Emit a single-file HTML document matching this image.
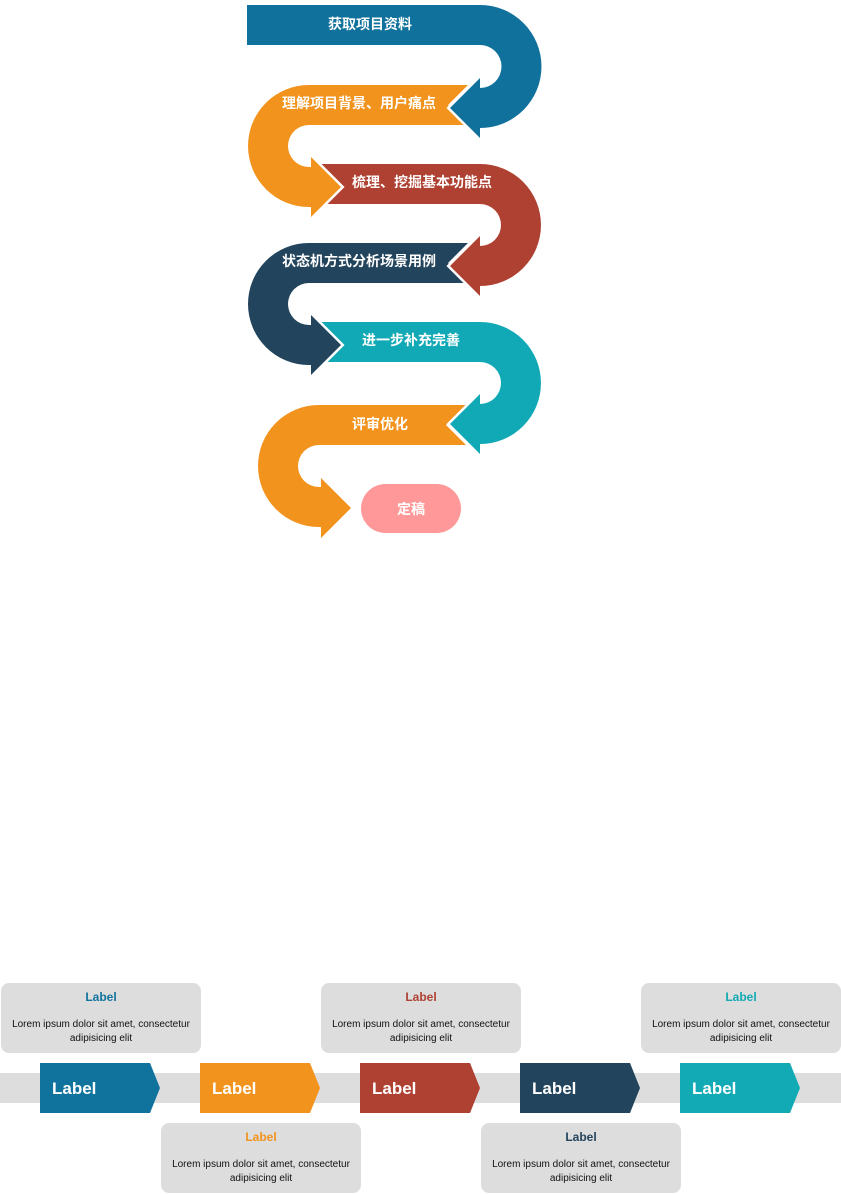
<!DOCTYPE html>
<html><head><meta charset="utf-8"><style>
body{margin:0;width:841px;height:1194px;background:#fff;overflow:hidden;position:relative;font-family:"Liberation Sans","Noto Sans CJK SC",sans-serif}
svg{position:absolute;left:0;top:0}
.card{position:absolute;width:200px;height:70px;background:#dddddd;border-radius:8px;text-align:center}
.card b{display:block;font-size:12px;margin-top:7px;line-height:14px}
.card p{margin:14px 0 0;font-size:10px;line-height:14px;color:#111}
</style></head><body>
<svg width="841" height="1194" font-family="Liberation Sans, Noto Sans CJK SC, sans-serif" font-weight="bold" font-size="14" fill="#fff">
<rect x="361" y="484" width="100" height="49" rx="24.5" fill="#ff9999"/>
<path d="M466,405 L446,425 L466,445 L319,445 A21,21 0 0 0 319,487 L321,487 L321,478 L351,508 L321,538 L321,527 L319,527 A61,61 0 0 1 319,405 Z" fill="#f2931e"/>
<path d="M320,322 L340,342 L320,362 L480,362 A21,21 0 0 1 480,404 L480,394 L450,424 L480,454 L480,444 A61,61 0 0 0 480,322 Z" fill="#12a9b6"/>
<path d="M480,394 L450,424 L480,454" fill="none" stroke="#fff" stroke-width="5"/>
<path d="M480,394 L450,424 L480,454 Z" fill="#12a9b6"/>
<path d="M468,243 L448,263 L468,283 L309,283 A21,21 0 0 0 309,325 L311,325 L311,315 L341,345 L311,375 L311,365 L309,365 A61,61 0 0 1 309,243 Z" fill="#23445d"/>
<path d="M311,315 L341,345 L311,375" fill="none" stroke="#fff" stroke-width="5"/>
<path d="M311,315 L341,345 L311,375 Z" fill="#23445d"/>
<path d="M320,164 L340,184 L320,204 L480,204 A21,21 0 0 1 480,246 L480,236 L450,266 L480,296 L480,286 A61,61 0 0 0 480,164 Z" fill="#ae4132"/>
<path d="M480,236 L450,266 L480,296" fill="none" stroke="#fff" stroke-width="5"/>
<path d="M480,236 L450,266 L480,296 Z" fill="#ae4132"/>
<path d="M468,85 L448,105 L468,125 L309,125 A21,21 0 0 0 309,167 L311,167 L311,157 L341,187 L311,217 L311,207 L309,207 A61,61 0 0 1 309,85 Z" fill="#f2931e"/>
<path d="M311,157 L341,187 L311,217" fill="none" stroke="#fff" stroke-width="5"/>
<path d="M311,157 L341,187 L311,217 Z" fill="#f2931e"/>
<path d="M247,5 L480,5 A61.5,61.5 0 0 1 480,128 L480,138 L450,108 L480,78 L480,88 A21.5,21.5 0 0 0 480,45 L247,45 Z" fill="#10719c"/>
<path d="M480,78 L450,108 L480,138" fill="none" stroke="#fff" stroke-width="5"/>
<path d="M480,78 L450,108 L480,138 Z" fill="#10719c"/>
<text x="370" y="29" text-anchor="middle">获取项目资料</text>
<text x="359" y="108" text-anchor="middle">理解项目背景、用户痛点</text>
<text x="422" y="187" text-anchor="middle">梳理、挖掘基本功能点</text>
<text x="359" y="266" text-anchor="middle">状态机方式分析场景用例</text>
<text x="411" y="345" text-anchor="middle">进一步补充完善</text>
<text x="380" y="429" text-anchor="middle">评审优化</text>
<text x="411" y="514" text-anchor="middle">定稿</text>

<rect x="0" y="1073" width="841" height="30" fill="#dddddd"/>
<g font-size="17">
<path d="M40,1063 H150 L160,1088 L150,1113 H40 Z" fill="#10739e"/><text x="52" y="1094">Label</text>
<path d="M200,1063 H310 L320,1088 L310,1113 H200 Z" fill="#f2931e"/><text x="212" y="1094">Label</text>
<path d="M360,1063 H470 L480,1088 L470,1113 H360 Z" fill="#ae4132"/><text x="372" y="1094">Label</text>
<path d="M520,1063 H630 L640,1088 L630,1113 H520 Z" fill="#23445d"/><text x="532" y="1094">Label</text>
<path d="M680,1063 H790 L800,1088 L790,1113 H680 Z" fill="#12aab5"/><text x="692" y="1094">Label</text>
</g>
</svg>
<div class="card" style="left:1px;top:983px"><b style="color:#10739e">Label</b><p>Lorem ipsum dolor sit amet, consectetur<br>adipisicing elit</p></div>
<div class="card" style="left:321px;top:983px"><b style="color:#ae4132">Label</b><p>Lorem ipsum dolor sit amet, consectetur<br>adipisicing elit</p></div>
<div class="card" style="left:641px;top:983px"><b style="color:#12aab5">Label</b><p>Lorem ipsum dolor sit amet, consectetur<br>adipisicing elit</p></div>
<div class="card" style="left:161px;top:1123px"><b style="color:#f2931e">Label</b><p>Lorem ipsum dolor sit amet, consectetur<br>adipisicing elit</p></div>
<div class="card" style="left:481px;top:1123px"><b style="color:#23445d">Label</b><p>Lorem ipsum dolor sit amet, consectetur<br>adipisicing elit</p></div>
</body></html>
